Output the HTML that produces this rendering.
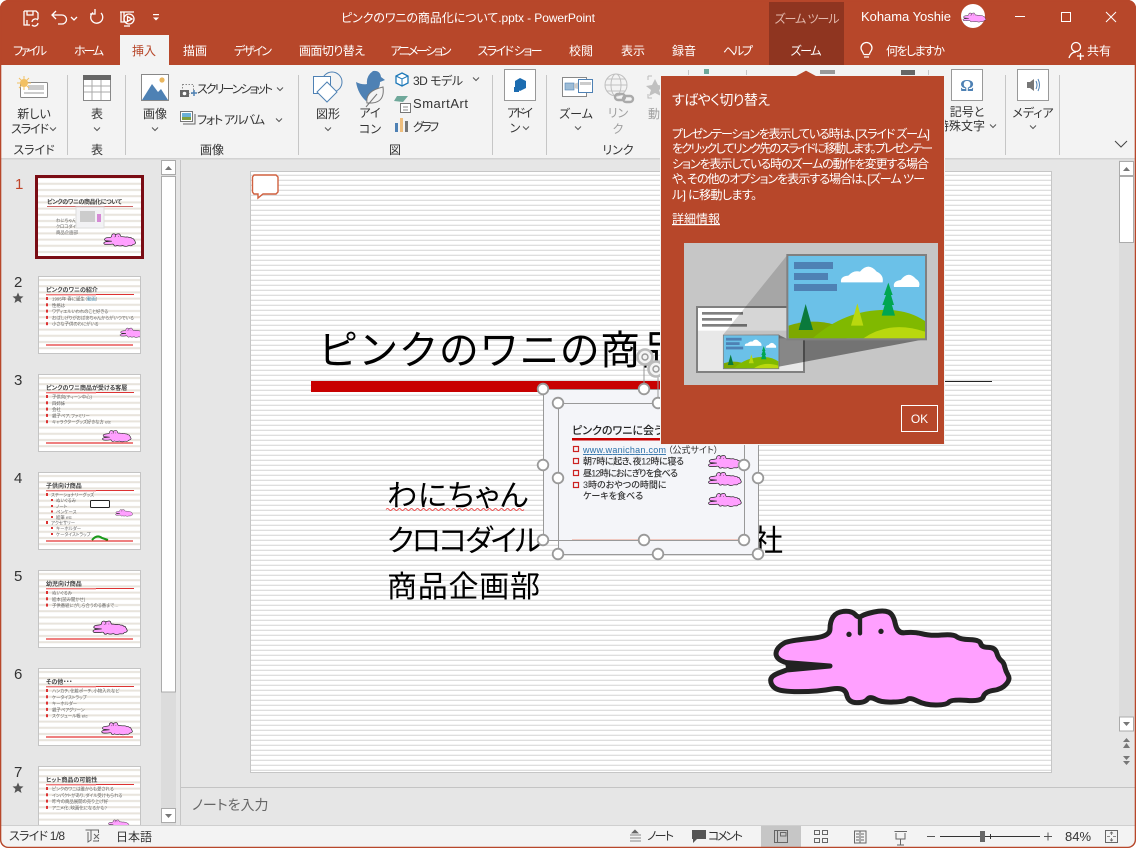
<!DOCTYPE html>
<html lang="ja"><head><meta charset="utf-8"><title>PowerPoint</title>
<style>
html,body{margin:0;padding:0;background:#fff;width:1136px;height:848px;overflow:hidden}
svg{display:block}
text{font-family:"Liberation Sans","Noto Sans CJK JP",sans-serif;font-feature-settings:"palt";font-size:12px;fill:#333}
.w{fill:#fff}.c{text-anchor:middle}.g{fill:#a0a0a0}
.m{font-size:6px;font-weight:700;fill:#444}.s{font-size:4.4px;fill:#666}
.l{fill:none;stroke:#fff;stroke-width:1.3}
.i{fill:none;stroke:#666;stroke-width:1}
</style></head><body>
<svg width="1136" height="848" viewBox="0 0 1136 848" xmlns="http://www.w3.org/2000/svg">
<defs>
<clipPath id="win"><rect width="1136" height="848" rx="8"/></clipPath>
<clipPath id="tc"><rect x="0" y="160" width="160" height="665"/></clipPath>
<pattern id="st" width="5" height="5" patternUnits="userSpaceOnUse" x="0" y="172"><rect width="5" height="5" fill="#fff"/><rect y="2.7" width="5" height="1.2" fill="#dadada"/></pattern>
<pattern id="ts" width="6" height="6.2" patternUnits="userSpaceOnUse"><rect width="6" height="6.2" fill="#fff"/><rect y="3" width="6" height="2" fill="#e8e4dc"/></pattern>
<g id="croc"><path d="M107,157Q130,150 185,145Q240,140 240,117Q240,95 249,81Q258,67 281,64Q305,62 315,73Q325,85 335,78Q345,72 372,66Q400,60 415,66Q430,72 436,102Q443,132 466,128Q490,125 515,131Q540,138 575,135Q610,132 620,140Q630,148 660,149Q690,150 692,161Q695,172 715,172Q735,172 740,188Q745,205 753,211Q762,218 764,230Q767,243 774,255Q782,268 768,283Q755,298 730,301Q705,305 700,320Q695,335 650,331Q605,328 597,336Q590,345 557,345Q525,345 502,333Q480,322 472,328Q465,335 430,336Q395,338 377,328Q360,318 352,328Q345,338 320,338Q295,338 290,314Q285,290 245,297Q205,305 147,305Q90,305 76,295Q62,285 62,271Q62,258 86,249L110,240L240,228L110,218Q80,210 78,192Q78,172 107,157Z" fill="#ffa0ff" stroke="#222" stroke-width="15" stroke-linejoin="round"/><path d="M330,85L330,130" stroke="#222" stroke-width="13" stroke-linecap="round"/><path d="M105,220L245,228L110,242Z" fill="#222"/><circle cx="297" cy="133" r="8" fill="#222"/><circle cx="393" cy="124" r="8" fill="#222"/></g>
<path id="chev" d="M-3,-1.5L0,1.5L3,-1.5" fill="none" stroke="#555" stroke-width="1"/>
<circle id="h" r="5.3" fill="#fff" stroke="#999" stroke-width="1.8"/>
<g id="pic">
<rect x="382" y="540" width="416" height="253" fill="#6bc1e8"/>
<rect x="402" y="561" width="117" height="21" fill="#4e81b4"/><rect x="402" y="594" width="102" height="21" fill="#4e81b4"/><rect x="402" y="627" width="129" height="21" fill="#4e81b4"/>
<path d="M543,622Q540,604 565,602Q580,585 600,590Q625,560 650,590Q672,600 668,622Z" fill="#fff"/>
<path d="M702,636Q698,618 722,615Q745,585 768,612Q782,620 777,636Z" fill="#fff"/>
<path d="M386,790L386,752Q450,730 520,748L560,790Z" fill="#7da800"/>
<path d="M458,790Q560,700 690,705Q750,708 795,738L795,790Z" fill="#80b900"/>
<path d="M610,790Q690,735 795,770L795,790Z" fill="#b9d80e"/>
<path d="M437,687L416,765L459,765Z" fill="#0a7a3c"/>
<path d="M592,685L573,752L610,752Z" fill="#b9d80e"/>
<path d="M685,623L672,660L678,660L667,690L674,690L665,722L705,722L696,690L702,690L693,660L698,660Z" fill="#00a651"/>
<rect x="382" y="540" width="416" height="253" fill="none" stroke="#808080" stroke-width="6"/>
</g>
<path id="star" d="M0,-5.5L1.6,-1.7L5.5,-1.5L2.5,1L3.5,5L0,2.8L-3.5,5L-2.5,1L-5.5,-1.5L-1.6,-1.7Z" fill="#555"/>
</defs>
<g clip-path="url(#win)">
<rect width="1136" height="848" fill="#e6e6e6"/>
<!-- title bar -->
<rect width="1136" height="65" fill="#b7472a"/>
<rect x="769" y="2" width="75" height="63" fill="#8f3520"/>
<!-- QAT -->
<g class="l"><path d="M24,11H36L38,13V19M24,11V25H30" class="l"/><path d="M27,11V15H33V11M27,25V20" class="l"/><path d="M32,22A3.5,3.5 0 0 1 38,20M38,23A3.5,3.5 0 0 1 32,25" class="l"/>
<path d="M52,15H62A4.5,4.5 0 0 1 62,24H58M56,11L52,15L56,19" class="l" stroke-width="1.6"/>
<path d="M101,13A6,6 0 1 1 93,12.5M95,9V14H90" class="l" stroke-width="1.6"/>
<path d="M120,12H134M121,12V22H127M124,12V22" class="l"/><circle cx="129" cy="19" r="5" class="l"/><path d="M127.5,16.5L132,19L127.5,21.5Z" class="l"/><path d="M124,26H130" class="l"/></g>
<path d="M71,17L74,20L77,17" class="l"/><rect x="153" y="14" width="6" height="1.2" fill="#fff"/><path d="M153,17.5H159L156,20.5Z" fill="#fff"/>
<text x="468" y="22" class="w c" textLength="254">ピンクのワニの商品化について.pptx  -  PowerPoint</text>
<text x="807" y="23" class="c" style="fill:#e3b9ad" textLength="65">ズーム ツール</text>
<text x="861" y="21" class="w" style="font-size:13px" textLength="90">Kohama Yoshie</text>
<circle cx="973" cy="16" r="12" fill="#fff"/><use href="#croc" transform="translate(961,11) scale(.032)"/>
<rect x="1015" y="16" width="10" height="1" fill="#fff"/><rect x="1061.5" y="12.5" width="9" height="9" fill="none" stroke="#fff"/><path d="M1106,12L1116,22M1116,12L1106,22" stroke="#fff"/>
<!-- tabs -->
<rect x="120" y="35" width="49" height="30" fill="#f3f3f3"/>
<g class="tabs">
<text x="30" y="55" class="w c" textLength="34">ファイル</text><text x="89" y="55" class="w c" textLength="30">ホーム</text><text x="144" y="55" class="c" style="fill:#b7472a" textLength="24">挿入</text><text x="195" y="55" class="w c" textLength="24">描画</text><text x="253" y="55" class="w c" textLength="38">デザイン</text><text x="332" y="55" class="w c" textLength="66">画面切り替え</text><text x="421" y="55" class="w c" textLength="61">アニメーション</text><text x="510" y="55" class="w c" textLength="65">スライド ショー</text><text x="581" y="55" class="w c" textLength="24">校閲</text><text x="633" y="55" class="w c" textLength="24">表示</text><text x="684" y="55" class="w c" textLength="24">録音</text><text x="738" y="55" class="w c" textLength="30">ヘルプ</text><text x="806" y="55" class="w c" textLength="31">ズーム</text>
<text x="886" y="55" class="w" textLength="59">何をしますか</text><text x="1087" y="55" class="w" textLength="24">共有</text></g>
<path d="M864,57H869M863.5,54.5H869.5M863.5,54.5C863.5,52 861,51 861,48A5.5,5.5 0 0 1 872,48C872,51 869.5,52 869.5,54.5" class="l" stroke-width="1"/>
<circle cx="1076" cy="47" r="4.5" class="l" stroke-width="1"/><path d="M1069,58Q1071,52 1076,52M1077,56H1084M1080.5,53V60" class="l" stroke-width="1"/>
<!-- ribbon -->
<rect y="65" width="1136" height="93" fill="#f3f3f3"/><rect y="158" width="1136" height="1.5" fill="#d2d2d2"/>
<g fill="#c6c6c6"><rect x="67" y="75" width="1" height="80"/><rect x="125" y="75" width="1" height="80"/><rect x="298" y="75" width="1" height="80"/><rect x="492" y="75" width="1" height="80"/><rect x="546" y="75" width="1" height="80"/><rect x="688" y="70" width="1" height="85"/><rect x="746" y="70" width="1" height="85"/><rect x="928" y="70" width="1" height="85"/><rect x="1005" y="75" width="1" height="80"/><rect x="1059" y="75" width="1" height="80"/></g>
<!-- new slide -->
<rect x="20.5" y="82.5" width="27" height="15" rx="1" fill="#fff" stroke="#888"/><rect x="28" y="85" width="16" height="5" fill="#ccc"/><path d="M24,93H44" stroke="#999"/><circle cx="24" cy="83" r="4" fill="#f2c063"/><path d="M24,76V90M17,83H31M19,78L29,88M29,78L19,88" stroke="#f2c063"/>
<text x="34" y="118" class="c">新しい</text><text x="11" y="133" textLength="38">スライド</text><use href="#chev" x="53" y="129"/>
<text x="34" y="154" class="c">スライド</text>
<!-- table -->
<rect x="83.5" y="75.5" width="27" height="25" fill="#fff" stroke="#888"/><rect x="83" y="75" width="28" height="5" fill="#666"/><path d="M84,86H110M84,92H110M92,80V100M101,80V100" stroke="#aaa"/>
<text x="97" y="118" class="c">表</text><use href="#chev" x="97" y="129"/><text x="97" y="154" class="c">表</text>
<!-- image -->
<rect x="141.5" y="74.5" width="27" height="26" fill="#fff" stroke="#888"/><circle cx="162" cy="80" r="2.6" fill="#e9b65e"/><path d="M142,100L152,84L158,92L161,89L168,100Z" fill="#4e81b4"/>
<text x="155" y="118" class="c">画像</text><use href="#chev" x="155" y="129"/><text x="212" y="154" class="c">画像</text>
<rect x="182.5" y="84.5" width="11" height="9" fill="none" stroke="#888" stroke-dasharray="1.5 1.5"/><rect x="180" y="90" width="9" height="7" fill="#666"/><circle cx="184.5" cy="93.5" r="1.8" fill="#fff"/><path d="M194,90V96M191,93H197" stroke="#4e81b4" stroke-width="1.5"/>
<text x="197" y="93" textLength="76">スクリーンショット</text><use href="#chev" x="280" y="89"/>
<rect x="180.5" y="111.5" width="12" height="10" fill="#fff" stroke="#777"/><rect x="182" y="113" width="9" height="4" fill="#6bb1d8"/><rect x="182" y="117" width="9" height="3" fill="#80a040"/><path d="M183,124H195V114" class="i"/>
<text x="197" y="124" textLength="68">フォト アルバム</text><use href="#chev" x="279" y="120"/>
<!-- shapes -->
<circle cx="332" cy="82" r="10" fill="none" stroke="#4e81b4"/><rect x="313.5" y="76.5" width="17" height="17" fill="#fff" stroke="#4e81b4"/><path d="M327,82L337,92L327,102L317,92Z" fill="#fff" stroke="#4e81b4"/>
<text x="328" y="118" class="c">図形</text><use href="#chev" x="328" y="129"/>
<!-- icon -->
<path d="M356,82Q362,85 367,84Q366,76 373,71Q380,70 381,77L385,80L380,82Q380,90 372,93L366,101Q358,94 356,82Z" fill="#4e81b4"/><path d="M367,103Q365,91 383,87Q385,102 372,103Z" fill="#f3f3f3" stroke="#777"/><path d="M366,107L377,94" stroke="#777"/>
<text x="370" y="117" class="c">アイ</text><text x="370" y="133" class="c">コン</text>
<text x="395" y="154" class="c">図</text>
<path d="M402,73L408,76V83L402,86L396,83V76Z" fill="#fff" stroke="#1c78b8" stroke-width="1.3"/><path d="M396,76L402,79L408,76M402,79V86" class="i" style="stroke:#1c78b8"/>
<text x="413" y="85" textLength="50">3D モデル</text><use href="#chev" x="476" y="79"/>
<path d="M394,101L397,96H408L403,102Z" fill="#6fa89a"/><rect x="400.5" y="103.5" width="10" height="9" fill="#fff" stroke="#777"/><path d="M403,107H408M403,110H408" stroke="#888"/>
<text x="413" y="108" style="font-size:13px" textLength="55">SmartArt</text>
<rect x="395" y="123" width="3" height="9" fill="#4e81b4"/><rect x="400" y="118" width="3" height="14" fill="#efbe7d"/><rect x="405" y="121" width="3" height="11" fill="#777"/>
<text x="413" y="131" textLength="26">グラフ</text>
<!-- add-in -->
<rect x="504.5" y="69.5" width="31" height="31" fill="#fff" stroke="#999"/><path d="M520,78L526,81V88L520,91L515,88V81Z" fill="#1c6cb0"/><rect x="514" y="87" width="5" height="5" fill="#1c6cb0"/>
<text x="520" y="117" class="c" textLength="26">アドイ</text><text x="515" y="132" class="c">ン</text><use href="#chev" x="526" y="128"/>
<!-- zoom -->
<rect x="562.5" y="77.5" width="24" height="19" fill="#fff" stroke="#888"/><rect x="565" y="83" width="9" height="7" fill="#9dbcd6" stroke="#4e81b4" stroke-width=".6"/><path d="M574,84L582,81V90L574,88Z" fill="#ccc"/><rect x="578.5" y="79.5" width="14" height="13" fill="#fff" stroke="#4e81b4"/><rect x="580" y="82" width="11" height="3" fill="#ccc"/>
<text x="576" y="118" class="c">ズーム</text><use href="#chev" x="578" y="128"/>
<g fill="none" stroke="#c0c0c0"><circle cx="616" cy="85" r="11"/><ellipse cx="616" cy="85" rx="5" ry="11"/><path d="M605,85H627M607,79H625M607,91H625"/></g><rect x="615" y="94" width="10" height="6" rx="3" fill="none" stroke="#aaa" stroke-width="2.4"/><rect x="623" y="96" width="10" height="6" rx="3" fill="none" stroke="#aaa" stroke-width="2.4"/>
<text x="618" y="117" class="c g">リン</text><text x="618" y="133" class="c g">ク</text><text x="618" y="154" class="c">リンク</text>
<path d="M648,76H652M648,76V80M648,94V98H652" fill="none" stroke="#bbb"/><path d="M655,79L658,85L664,86L659,90L661,96L655,93L649,96L651,90L646,86L652,85Z" fill="#c0c0c0"/><text x="654" y="118" class="c g">動</text>
<rect x="704" y="69" width="5" height="5" fill="#6fa89a"/><rect x="820" y="70" width="15" height="4" fill="#999"/><rect x="901" y="70" width="14" height="5" fill="#666"/>
<!-- symbol, media -->
<rect x="951.5" y="69.5" width="31" height="31" fill="#fff" stroke="#999"/><text x="967" y="91" class="c" style="font-family:'Liberation Serif',serif;font-weight:700;font-size:17px;fill:#4e81b4">Ω</text>
<text x="967" y="116" class="c">記号と</text><text x="937" y="130" textLength="48" style="font-feature-settings:normal">特殊文字</text><use href="#chev" x="993" y="126"/>
<rect x="1017.5" y="69.5" width="31" height="31" fill="#fff" stroke="#999"/><path d="M1027,82H1030L1034,79V91L1030,88H1027Z" fill="#777"/><path d="M1036,81Q1038,85 1036,89M1038,79Q1041,85 1038,91" fill="none" stroke="#4e81b4"/>
<text x="1033" y="117" class="c">メディア</text><use href="#chev" x="1033" y="127"/>
<path d="M1115,141L1121,147L1127,141" fill="none" stroke="#444"/>
<!-- thumbs panel -->
<g clip-path="url(#tc)">
<text x="15" y="189" style="font-size:15px;fill:#c0452a">1</text>
<text x="14" y="287" style="font-size:15px">2</text><use href="#star" x="18" y="298"/>
<text x="14" y="385" style="font-size:15px">3</text><text x="14" y="483" style="font-size:15px">4</text><text x="14" y="581" style="font-size:15px">5</text><text x="14" y="679" style="font-size:15px">6</text><text x="14" y="777" style="font-size:15px">7</text><use href="#star" x="18" y="788"/>
<!-- T1 -->
<rect x="36.5" y="176.5" width="106" height="81" fill="#fff" stroke="#7a0c14" stroke-width="3"/>
<rect x="38" y="178" width="103" height="78" fill="url(#ts)"/>
<text x="47" y="204" class="m" textLength="75">ピンクのワニの商品化について</text><rect x="47" y="206" width="86" height="1" fill="#c66"/>
<text x="56" y="222" class="s">わにちゃん</text><text x="56" y="228" class="s">クロコダイル</text><text x="56" y="234" class="s">商品企画部</text>
<rect x="76" y="207" width="28" height="21" fill="#f2f2f4" stroke="#ddd"/><rect x="80" y="211" width="15" height="11" fill="#ccc"/><rect x="97" y="214" width="4" height="8" fill="#d58ad5"/>
<use href="#croc" transform="translate(101,231) scale(.0445)"/>
<!-- T2-T7 -->
<g id="t2" transform="translate(38,276)"><rect x=".5" y=".5" width="102" height="77" fill="url(#ts)" stroke="#c4c4c4"/><text x="8" y="16" class="m">ピンクのワニの紹介</text><rect x="8" y="18" width="88" height="1" fill="#d33"/><rect x="8" y="18" width="50" height="1.4" fill="#e77"/>
<g fill="#d33"><rect x="8" y="21" width="2" height="3"/><rect x="8" y="27.3" width="2" height="3"/><rect x="8" y="33.6" width="2" height="3"/><rect x="8" y="39.9" width="2" height="3"/><rect x="8" y="46.2" width="2" height="3"/></g>
<text x="14" y="24.5" class="s">1995年 春に誕生（<tspan fill="#48a">動画</tspan>）</text><text x="14" y="30.8" class="s">性格は</text><text x="14" y="37.1" class="s">ワディエルいわれのこと好きる</text><text x="14" y="43.4" class="s">おばしげりがおばあちゃんからがいつでいる</text><text x="14" y="49.7" class="s">小さな子供のわにがいる</text>
<clipPath id="c2"><rect width="102" height="78"/></clipPath><g clip-path="url(#c2)"><use href="#croc" transform="translate(80,50) scale(.033)"/></g><rect x="8" y="68.5" width="87" height="1" fill="#d00"/></g>
<g transform="translate(38,374)"><rect x=".5" y=".5" width="102" height="77" fill="url(#ts)" stroke="#c4c4c4"/><text x="8" y="16" class="m">ピンクのワニ商品が受ける客層</text><rect x="8" y="18" width="88" height="1" fill="#d33"/><rect x="8" y="18" width="50" height="1.4" fill="#e77"/>
<g fill="#d33"><rect x="8" y="21" width="2" height="3"/><rect x="8" y="27.3" width="2" height="3"/><rect x="8" y="33.6" width="2" height="3"/><rect x="8" y="39.9" width="2" height="3"/><rect x="8" y="46.2" width="2" height="3"/></g>
<text x="14" y="24.5" class="s">子供向(ティーン中心)</text><text x="14" y="30.8" class="s">四姉妹</text><text x="14" y="37.1" class="s">会社</text><text x="14" y="43.4" class="s">親子ペア、ファミリー</text><text x="14" y="49.7" class="s">キャラクターグッズ好きな方 etc</text>
<use href="#croc" transform="translate(62,54) scale(.04)"/><rect x="8" y="68.5" width="87" height="1" fill="#d00"/></g>
<g transform="translate(38,472)"><rect x=".5" y=".5" width="102" height="77" fill="url(#ts)" stroke="#c4c4c4"/><text x="8" y="16" class="m">子供向け商品</text><rect x="8" y="18" width="88" height="1" fill="#d33"/><rect x="8" y="18" width="50" height="1.4" fill="#e77"/>
<g fill="#d33"><rect x="8" y="21" width="2" height="3"/><rect x="13" y="27" width="2" height="2"/><rect x="13" y="33" width="2" height="2"/><rect x="13" y="38.5" width="2" height="2"/><rect x="13" y="44" width="2" height="2"/><rect x="8" y="49" width="2" height="3"/><rect x="13" y="55" width="2" height="2"/><rect x="13" y="61" width="2" height="2"/></g>
<text x="13" y="24.5" class="s">ステーショナリーグッズ</text><text x="18" y="30" class="s">ぬいぐるみ</text><text x="18" y="36" class="s">ノート</text><text x="18" y="41.5" class="s">ペンケース</text><text x="18" y="47" class="s">絵筆 etc</text><text x="13" y="52.5" class="s">アクセサリー</text><text x="18" y="58" class="s">キーホルダー</text><text x="18" y="64" class="s">ケータイストラップ</text>
<rect x="52.5" y="28.5" width="19" height="7" rx="1" fill="#fff" stroke="#222"/><use href="#croc" transform="translate(76,36) scale(.024)"/><path d="M54,68Q59,62 64,66L70,68" fill="none" stroke="#1a9a1a" stroke-width="2"/><rect x="8" y="68.5" width="87" height="1" fill="#d00"/></g>
<g transform="translate(38,570)"><rect x=".5" y=".5" width="102" height="77" fill="url(#ts)" stroke="#c4c4c4"/><text x="8" y="16" class="m">幼児向け商品</text><rect x="8" y="18" width="88" height="1" fill="#d33"/><rect x="8" y="18" width="50" height="1.4" fill="#e77"/>
<g fill="#d33"><rect x="8" y="21" width="2" height="3"/><rect x="8" y="27.3" width="2" height="3"/><rect x="8" y="33.6" width="2" height="3"/></g>
<text x="14" y="24.5" class="s">ぬいぐるみ</text><text x="14" y="30.8" class="s">絵本(読み聞かせ)</text><text x="14" y="37.1" class="s">子供番組にがしら合うのる番まで…</text>
<use href="#croc" transform="translate(52,48) scale(.048)"/><rect x="8" y="68.5" width="87" height="1" fill="#d00"/></g>
<g transform="translate(38,668)"><rect x=".5" y=".5" width="102" height="77" fill="url(#ts)" stroke="#c4c4c4"/><text x="8" y="16" class="m">その他・・・</text><rect x="8" y="18" width="88" height="1" fill="#d33"/><rect x="8" y="18" width="50" height="1.4" fill="#e77"/>
<g fill="#d33"><rect x="8" y="21" width="2" height="3"/><rect x="8" y="27.3" width="2" height="3"/><rect x="8" y="33.6" width="2" height="3"/><rect x="8" y="39.9" width="2" height="3"/><rect x="8" y="46.2" width="2" height="3"/></g>
<text x="14" y="24.5" class="s">ハンカチ、化粧ポーチ、小物入れなど</text><text x="14" y="30.8" class="s">ケータイストラップ</text><text x="14" y="37.1" class="s">キーホルダー</text><text x="14" y="43.4" class="s">親子ペアグリーン</text><text x="14" y="49.7" class="s">スケジュール帳 etc</text>
<use href="#croc" transform="translate(61,52) scale(.043)"/><rect x="8" y="68.5" width="87" height="1" fill="#d00"/></g>
<g transform="translate(38,766)"><rect x=".5" y=".5" width="102" height="77" fill="url(#ts)" stroke="#c4c4c4"/><text x="8" y="16" class="m">ヒット商品の可能性</text><rect x="8" y="18" width="88" height="1" fill="#d33"/><rect x="8" y="18" width="50" height="1.4" fill="#e77"/>
<g fill="#d33"><rect x="8" y="21" width="2" height="3"/><rect x="8" y="27.3" width="2" height="3"/><rect x="8" y="33.6" width="2" height="3"/><rect x="8" y="39.9" width="2" height="3"/></g>
<text x="14" y="24.5" class="s">ピンクのワニは誰からも愛される</text><text x="14" y="30.8" class="s">インパクトがあり、ダイル受けもられる</text><text x="14" y="37.1" class="s">昨今の商品展開の売り上げ好</text><text x="14" y="43.4" class="s">アニメ化、映画化になるかも?</text>
<use href="#croc" transform="translate(68,52) scale(.03)"/></g>
</g>
<!-- thumbs scrollbar -->
<rect x="161" y="160" width="15" height="665" fill="#dcdcdc"/>
<rect x="161.5" y="160.5" width="14" height="14" fill="#fff" stroke="#ababab"/><path d="M165,170H172L168.5,166Z" fill="#777"/>
<rect x="161.5" y="176.5" width="14" height="515.5" fill="#fff" stroke="#ababab"/>
<rect x="161.5" y="808.5" width="14" height="14" fill="#fff" stroke="#ababab"/><path d="M165,814H172L168.5,818Z" fill="#777"/>
<rect x="180" y="160" width="1" height="665" fill="#c6c6c6"/>
<!-- slide -->
<rect x="250.5" y="171.5" width="801" height="601" fill="url(#st)" stroke="#c6c6c6"/>
<path d="M254,175H276L278,177V192L276,194H263L258,198V194H254L252.5,192V177Z" fill="#fff" stroke="#d0603f" stroke-width="1.4"/>
<text x="318" y="364" style="font-size:40px;fill:#000;font-feature-settings:normal;letter-spacing:.3px">ピンクのワニの商品化について</text>
<rect x="311" y="381" width="440" height="11" fill="#c80000"/>
<rect x="944" y="381" width="48" height="1" fill="#222"/>
<text x="387" y="506" style="font-size:30px;fill:#000" textLength="141">わにちゃん</text>
<path d="M386,509.5q1.5,-2 3,0t3,0t3,0t3,0t3,0t3,0t3,0t3,0t3,0t3,0t3,0t3,0t3,0t3,0t3,0t3,0t3,0t3,0t3,0t3,0t3,0t3,0t3,0t3,0t3,0t3,0t3,0t3,0t3,0t3,0t3,0t3,0t3,0t3,0t3,0t3,0t3,0t3,0t3,0t3,0t3,0t3,0t3,0t3,0t3,0t3,0" fill="none" stroke="#e33" stroke-width=".8"/>
<text x="387" y="551" style="font-size:30px;fill:#000" textLength="156">クロコダイル</text><text x="753" y="551" style="font-size:30px;fill:#000">社</text>
<text x="387" y="597" style="font-size:30px;fill:#000;font-feature-settings:normal" textLength="153">商品企画部</text>
<!-- embedded slide -->
<rect x="558" y="403" width="200" height="151" fill="#f4f5f9"/><rect x="543" y="389" width="201" height="151" fill="#f4f5f9"/>
<text x="572" y="434" style="font-size:11px;font-weight:500;fill:#222">ピンクのワニに会うには</text>
<rect x="572" y="438" width="120" height="2.5" fill="#c80000"/>
<g fill="none" stroke="#c22" stroke-width="1.2"><rect x="573.5" y="446.5" width="5" height="5"/><rect x="573.5" y="458.5" width="5" height="5"/><rect x="573.5" y="470.5" width="5" height="5"/><rect x="573.5" y="482.5" width="5" height="5"/></g>
<text x="583" y="453" style="font-size:9px;fill:#2c70a8;text-decoration:underline" textLength="83">www.wanichan.com</text><text x="668" y="453" style="font-size:9px">（公式サイト）</text>
<text x="583" y="464.5" style="font-size:9px;font-weight:500" textLength="101">朝7時に起き、夜12時に寝る</text><text x="583" y="476.5" style="font-size:9px;font-weight:500" textLength="95">昼12時におにぎりを食べる</text><text x="583" y="488" style="font-size:9px;font-weight:500">3時のおやつの時間に</text><text x="583" y="499" style="font-size:9px;font-weight:500">ケーキを食べる</text>
<use href="#croc" transform="translate(705.6,452.6) scale(.046)"/><use href="#croc" transform="translate(705.6,469.6) scale(.046)"/><use href="#croc" transform="translate(705.6,490.6) scale(.046)"/>
<rect x="572" y="539" width="172" height="1.5" fill="#f0c8c0"/>
<rect x="543.5" y="389.5" width="201" height="151" fill="none" stroke="#999"/><rect x="558.5" y="403.5" width="200" height="151" fill="none" stroke="#999"/>
<path d="M644,389V356M658,403V369" stroke="#999"/>
<g><circle cx="645" cy="357" r="7.5" fill="#f4f4f4" stroke="#bbb" stroke-width="2.6"/><circle cx="645" cy="357" r="3" fill="none" stroke="#999" stroke-width="1.4"/><circle cx="656" cy="369" r="7.5" fill="#f4f4f4" stroke="#bbb" stroke-width="2.6"/><circle cx="656" cy="369" r="3" fill="none" stroke="#999" stroke-width="1.4"/></g>
<use href="#h" x="543" y="389"/><use href="#h" x="644" y="389"/><use href="#h" x="543" y="465"/><use href="#h" x="744" y="465"/><use href="#h" x="543" y="540"/><use href="#h" x="644" y="540"/><use href="#h" x="744" y="540"/>
<use href="#h" x="558" y="403"/><use href="#h" x="658" y="403"/><use href="#h" x="558" y="478"/><use href="#h" x="758" y="478"/><use href="#h" x="558" y="554"/><use href="#h" x="658" y="554"/><use href="#h" x="758" y="554"/>
<use href="#croc" transform="translate(750,590) scale(.33333)"/>
<!-- right scrollbar -->
<rect x="1119" y="160" width="15" height="557" fill="#dcdcdc"/>
<rect x="1119.5" y="161.5" width="14" height="14" fill="#fff" stroke="#ababab"/><path d="M1123,171H1130L1126.5,167Z" fill="#777"/>
<rect x="1119.5" y="176.5" width="14" height="66" fill="#fff" stroke="#ababab"/>
<rect x="1119.5" y="717" width="14" height="14" fill="#fff" stroke="#ababab"/><path d="M1123,722H1130L1126.5,726Z" fill="#777"/>
<path d="M1123,742H1130L1126.5,738ZM1123,748H1130L1126.5,743ZM1123,756H1130L1126.5,760ZM1123,761H1130L1126.5,765Z" fill="#777"/>
<!-- notes -->
<rect x="181" y="787" width="955" height="1" fill="#c4c4c4"/>
<text x="192" y="810" style="font-size:14px;fill:#666">ノートを入力</text>
<!-- status -->
<rect y="825" width="1136" height="23" fill="#f3f3f3"/><rect y="825" width="1136" height="1" fill="#cfcfcf"/>
<text x="9" y="840" textLength="56">スライド 1/8</text>
<path d="M85.5,830H91V840L88,842V832M91,830H98.5V833M98.5,840V841H93" class="i"/><path d="M94,834L99,839M99,834L94,839" stroke="#666"/>
<text x="116" y="841" textLength="36" style="font-feature-settings:normal">日本語</text>
<path d="M635,830L638,833H632ZM630,835H641M630,838H641M630,841H641" fill="#666" stroke="#666" stroke-width=".8"/><text x="647" y="840" textLength="27">ノート</text>
<path d="M692,830H706V839H697L693,843V839H692Z" fill="#555"/><text x="708" y="840" textLength="35">コメント</text>
<rect x="761" y="826" width="40" height="22" fill="#c6c6c6"/>
<g class="i"><rect x="774.5" y="830.5" width="13" height="12"/><path d="M777.5,831V842M780.5,832.5H786V836H780.5Z"/><rect x="814.5" y="830.5" width="5" height="4"/><rect x="822.5" y="830.5" width="5" height="4"/><rect x="814.5" y="838.5" width="5" height="4"/><rect x="822.5" y="838.5" width="5" height="4"/><path d="M854.5,831H860V843H854.5ZM860,831H866V843H860ZM856,834H859M856,837H859M856,840H859M861,834H864M861,837H864M861,840H864"/><path d="M894.5,831.5H907M896,833V839H905V833M900.5,839V845M897,845H904" stroke-width="1"/></g>
<rect x="927" y="836" width="8" height="1" fill="#555"/><rect x="940" y="836" width="100" height="1" fill="#333"/><rect x="990" y="834" width="1" height="5" fill="#333"/><rect x="980" y="831" width="5" height="11" fill="#666"/><path d="M1044,836.5H1052M1048,832.5V840.5" stroke="#555"/>
<text x="1065" y="841" style="font-size:13px" textLength="26">84%</text>
<rect x="1105.5" y="830.5" width="12" height="12" class="i"/><path d="M1111.5,832V835M1110,833.5L1111.5,832L1113,833.5M1111.5,841V838M1110,839.5L1111.5,841L1113,839.5M1107,836.5H1110M1113,836.5H1116" stroke="#666" fill="none" stroke-width=".8"/>
<!-- popup -->
<path d="M660.5,75.5H796L806,70L816,75.5H944.5V444.5H660.5Z" fill="#b7472a" stroke="#f3f3f3"/>
<text x="672" y="105" class="w" style="font-size:14px" textLength="98">すばやく切り替え</text>
<g class="pop"><text x="672" y="138" class="w" textLength="258">プレゼンテーションを表示している時は、[スライド ズーム]</text><text x="672" y="152.5" class="w" textLength="261">をクリックしてリンク先のスライドに移動します。プレゼンテー</text><text x="672" y="168" class="w" textLength="257">ションを表示している時のズームの動作を変更する場合</text><text x="672" y="183" class="w" textLength="253">や、その他のオプションを表示する場合は、[ズーム ツー</text><text x="672" y="199" class="w" textLength="85">ル] に移動します。</text>
<text x="672" y="223" class="w" textLength="48" style="text-decoration:underline;font-feature-settings:normal">詳細情報</text></g>
<g transform="translate(660,75) scale(.33333)">
<rect x="72" y="504" width="762" height="426" fill="#c6c6c6"/>
<rect x="111" y="696" width="321" height="195" fill="#e8e8e8" stroke="#808080" stroke-width="6"/><rect x="114" y="699" width="315" height="68" fill="#fff"/>
<rect x="126" y="711" width="123" height="8" fill="#808080"/><rect x="126" y="729" width="90" height="8" fill="#808080"/><rect x="126" y="747" width="135" height="8" fill="#808080"/>
<use href="#pic" transform="translate(190,780) scale(.4) translate(-382,-540)"/>
<path d="M190,778L382,540V790H357V780Z" fill="#000" opacity=".16"/>
<path d="M357,875L798,792H382L357,780Z" fill="#000" opacity=".42"/>
<use href="#pic"/>
</g>
<rect x="901.5" y="405.5" width="36" height="26" fill="none" stroke="#fff"/><text x="919.5" y="423" class="w c">OK</text>
<!-- window border -->
<rect x=".5" y=".5" width="1135" height="847" rx="8" fill="none" stroke="#b7472a" stroke-width="1.6"/>
</g>
</svg>
</body></html>
